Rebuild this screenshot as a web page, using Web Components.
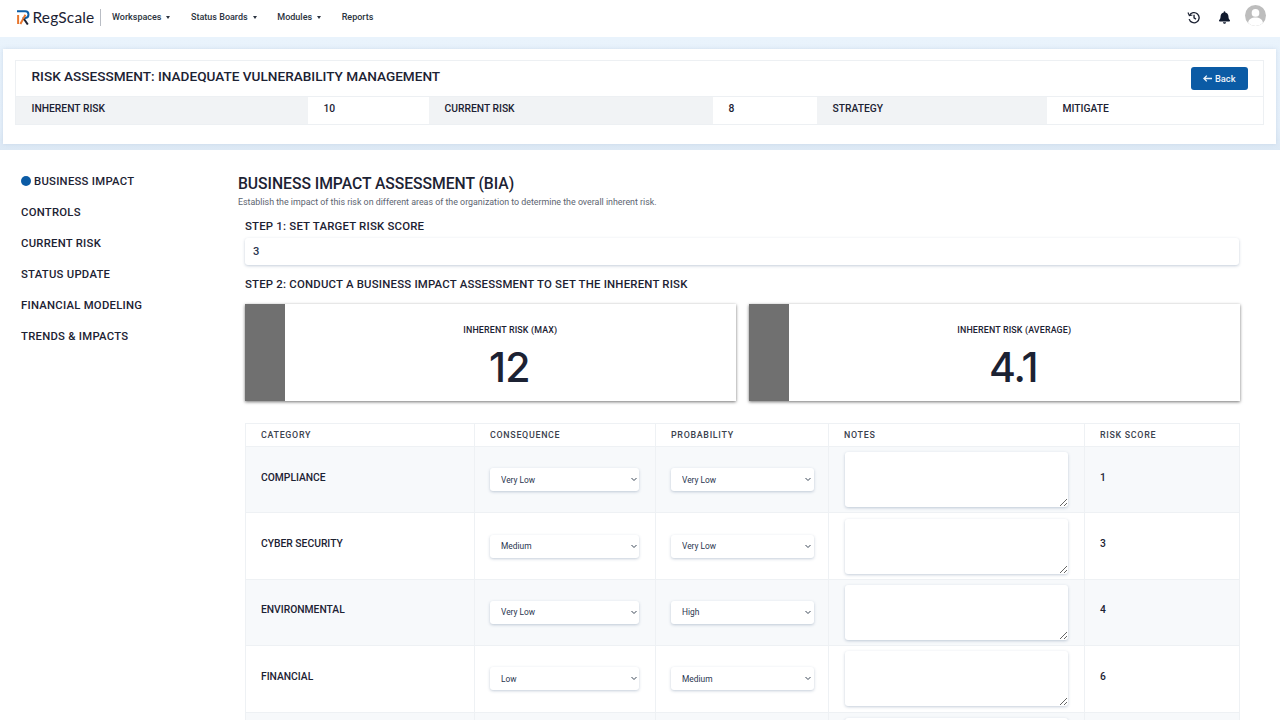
<!DOCTYPE html>
<html lang="en"><head><meta charset="utf-8"><title>Risk Assessment</title>
<style>
html,body{margin:0;height:720px;overflow:hidden;background:#fff;font-family:Roboto,"Liberation Sans",sans-serif;color:#1c2233}
app-page{display:block}
</style></head>
<body>
<template id="nav-t"><style>
:host{display:flex;align-items:center;height:37px;background:#fff;padding:0 14px 3px 17px;box-sizing:border-box;font:500 9px Roboto,sans-serif;color:#2b3340}
.logo{display:flex;align-items:center;gap:2.500px;height:17px;width:84px;box-sizing:border-box;border-right:1px solid #b9bdc4;margin-right:11px;flex:none}
.logo span{font:400 15.500px Lato,sans-serif;color:#1c2233;letter-spacing:.15px}
.item{display:flex;align-items:center;gap:5px;margin-right:20.600px}
.caret{width:0;height:0;border:2.600px solid transparent;border-top:3px solid #2b3340;border-bottom:0}
.sp{flex:1}.ic{display:flex}
.av{width:21px;height:21px;border-radius:50%;background:#bdbdbd;overflow:hidden;margin:-4px 0 0 14px}
</style>
<div class="logo"><svg width="13" height="15" viewBox="0 0 13 15"><path d="M1.100 14V5" stroke="#e8762d" stroke-width="2" fill="none"/><path d="M0 1.300H8.300C12.400 1.300 12.600 7.400 8.400 8H5.600" stroke="#0d5ea6" stroke-width="2" fill="none"/><path d="M3.400 14L8.400 4.800" stroke="#e8762d" stroke-width="2" fill="none"/><path d="M7 9L10.800 14.500" stroke="#1c2233" stroke-width="2" fill="none"/></svg><span>RegScale</span></div>
<div class="item">Workspaces <i class="caret"></i></div>
<div class="item">Status Boards <i class="caret"></i></div>
<div class="item">Modules <i class="caret"></i></div>
<div class="item">Reports</div>
<div class="sp"></div>
<div class="ic" style="margin-right:1px"><svg width="13" height="13" viewBox="0 0 24 24" fill="none" stroke="#1c2233" stroke-width="2.500"><path d="M4.600 8.200A9.400 9.400 0 1 1 4 15"/><path d="M1.800 2.800L4.400 8.600 10 7.400" stroke-width="2.200"/><path d="M13 7v5.600l3.600 2.400"/></svg></div>
<div class="ic" style="margin-left:18px;margin-right:1px"><svg width="11" height="13" viewBox="0 0 448 512" fill="#111a2e"><path d="M224 512c35 0 64-29 64-64H160c0 35 29 64 64 64zm215-150c-19-21-55-52-55-154 0-78-54-140-128-155V32a32 32 0 1 0-64 0v21C118 68 64 130 64 208c0 102-36 133-55 154-6 6-9 14-9 22 0 16 13 32 32 32h384c19 0 32-16 32-32 0-8-3-16-9-22z"/></svg></div>
<div class="av"><svg width="21" height="21" viewBox="0 0 24 24" fill="#fff"><circle cx="12" cy="9" r="4.400"/><path d="M3.500 21c0-4.400 4-6.600 8.500-6.600s8.500 2.200 8.500 6.600v3h-17z"/></svg></div>
</template>

<template id="hdr-t"><style>
:host{display:block;height:113px;background:linear-gradient(#e9f3fc,#e6f0fa 80%,#dde9f5);padding:12px 4px 6px 3px;box-sizing:border-box}
.card{background:#fff;height:95px;padding:11px 12px 0;box-sizing:border-box;box-shadow:0 0 4px rgba(120,150,190,.25)}
.box{border:1px solid #edf0f3;height:65px;box-sizing:border-box;display:flex;flex-direction:column}
.top{height:35px;display:flex;align-items:center;justify-content:space-between;padding:0 15px 0 15.500px;box-sizing:border-box}
h1{font:500 13.600px Roboto,sans-serif;margin:0;color:#1c2233;position:relative;top:-2.500px}
button{width:57px;height:23px;background:#0b5ba5;color:#eef4fa;border:0;border-radius:3px;font:500 9.300px Roboto,sans-serif;padding:0;display:flex;align-items:center;justify-content:center;gap:2.500px}
.row{flex:1;display:grid;grid-template-columns:292px 121px 284px 104px 230px 1fr;border-top:1px solid #edf0f3}
</style><div class="card"><div class="box">
<div class="top"><h1><slot name="title"></slot></h1><button><svg width="9" height="7" viewBox="0 0 9 7" fill="none" stroke="#eef4fa" stroke-width="1.300"><path d="M9 3.500H1M3.800.6L.9 3.500l2.900 2.900"/></svg>Back</button></div>
<div class="row"><slot></slot></div>
</div></div></template>

<template id="cell-t"><style>
:host{display:flex;align-items:center;padding:0 0 4px 15.500px;font:500 10.300px Roboto,sans-serif;color:#1c2233}
:host([g]){background:#f1f3f5}
</style><slot></slot></template>

<template id="side-t"><style>
:host{display:block;width:238px;padding:16px 0 0 21px;box-sizing:border-box;flex:none}
</style><slot></slot></template>

<template id="sitem-t"><style>
:host{display:flex;align-items:center;height:31px;font:500 11.300px Roboto,sans-serif;letter-spacing:.26px;color:#1c2233}
i{display:none;width:10px;height:10px;border-radius:50%;background:#0b5ba5;margin:-1px 3px 0 0}
:host([active]) i{display:block}
</style><i></i><slot></slot></template>

<template id="main-t"><style>
:host{display:block;flex:1;padding:24px 40px 0 0;min-width:0}
h2{font:500 15.700px Roboto,sans-serif;letter-spacing:-.03px;margin:0;line-height:20px;color:#1c2233}
p{font:400 8.850px Roboto,sans-serif;margin:2px 0 0;line-height:12px;color:#5c6470}
.in{padding-left:7px;padding-right:1px}
h3{font:500 11.400px Roboto,sans-serif;letter-spacing:.2px;margin:0;line-height:14px;color:#1c2233}
.input{margin-top:5px;height:27px;border-radius:3px;background:#fff;box-shadow:0 1px 3px rgba(60,90,130,.3);display:flex;align-items:center;padding-left:8px;font:500 11.200px Roboto,sans-serif;color:#2a3650}
.cards{display:grid;grid-template-columns:491px 491px;gap:13px;margin:13px 0 22px -0.500px}
</style>
<h2>BUSINESS IMPACT ASSESSMENT (BIA)</h2>
<p>Establish the impact of this risk on different areas of the organization to determine the overall inherent risk.</p>
<div class="in" style="margin-top:11px">
<h3>STEP 1: SET TARGET RISK SCORE</h3>
<div class="input">3</div>
<h3 style="margin-top:12px">STEP 2: CONDUCT A BUSINESS IMPACT ASSESSMENT TO SET THE INHERENT RISK</h3>
<div class="cards"><slot name="cards"></slot></div>
<slot></slot>
</div></template>

<template id="stat-t"><style>
:host{display:flex;height:97px;background:#fff;box-shadow:0 1px 3px rgba(0,0,0,.55)}
.bar{width:40.500px;background:#707070}
.b{flex:1;display:flex;flex-direction:column;align-items:center}
.l{font:500 8.900px Roboto,sans-serif;margin-top:21px;line-height:11px;color:#1c2233;letter-spacing:.15px}
.v{font:500 41px Inter,"Open Sans",sans-serif;line-height:40px;margin-top:11px;color:#1c2233;letter-spacing:-1px;padding-right:2px}
</style><div class="bar"></div><div class="b"><div class="l"><slot name="label"></slot></div><div class="v"><slot></slot></div></div></template>

<template id="table-t"><style>
:host{display:block;border:1px solid #eef1f4;border-bottom:0;box-sizing:border-box;width:995px}
.head{display:grid;grid-template-columns:229px 181px 173px 256px 1fr;height:22px;font:500 8.900px Roboto,sans-serif;letter-spacing:.7px;color:#3b424e}
.head div{display:flex;align-items:center;padding-left:15px;border-right:1px solid #eef1f4}
.head div:last-child{border:0}
</style><div class="head"><div>CATEGORY</div><div>CONSEQUENCE</div><div>PROBABILITY</div><div>NOTES</div><div>RISK SCORE</div></div><slot></slot></template>

<template id="row-t"><style>
:host{display:grid;grid-template-columns:229px 181px 173px 256px 1fr;height:66.400px;border-top:1px solid #eef1f4;box-sizing:border-box}
:host([shade]){background:#f7f9fb}
.c{display:flex;align-items:center;padding-left:15px;border-right:1px solid #eef1f4;font:500 10.300px Roboto,sans-serif;color:#1c2233;min-width:0}
.c:last-child{border:0}
.t{padding-bottom:5px}
.sel{position:relative;height:23px;border-radius:3px;background:#fff;box-shadow:0 1px 3px rgba(60,90,130,.3)}
select{appearance:none;-webkit-appearance:none;width:100%;height:100%;border:0;background:transparent;font:400 8.400px Roboto,sans-serif;color:#2a3650;padding:0 0 0 11px;margin:0;display:block;outline:0}
.sel svg{position:absolute;right:2.500px;top:9px;pointer-events:none}
textarea{display:block;width:223px;height:55px;box-sizing:border-box;border:0;border-radius:3px;background:#fff;box-shadow:0 1px 3px rgba(60,90,130,.3);padding:0;margin:0;resize:vertical;outline:0}
</style>
<div class="c"><span class="t"><slot></slot></span></div>
<div class="c"><div class="sel" style="width:149px"><select id="a"></select><svg width="6" height="5" viewBox="0 0 6 5" fill="none" stroke="#3b4656" stroke-width="1"><path d="M.5 1L3 3.500 5.500 1"/></svg></div></div>
<div class="c"><div class="sel" style="width:142.500px"><select id="b"></select><svg width="6" height="5" viewBox="0 0 6 5" fill="none" stroke="#3b4656" stroke-width="1"><path d="M.5 1L3 3.500 5.500 1"/></svg></div></div>
<div class="c" style="padding-left:15.500px"><textarea></textarea></div>
<div class="c"><span class="t" id="s"></span></div>
</template>

<template id="page-t"><style>
:host{display:block}
.body{display:flex}
</style><app-nav></app-nav><slot name="hdr"></slot><div class="body"><slot></slot></div></template>

<app-page>
<risk-header slot="hdr">
<span slot="title">RISK ASSESSMENT: INADEQUATE VULNERABILITY MANAGEMENT</span>
<stat-cell g>INHERENT RISK</stat-cell><stat-cell>10</stat-cell>
<stat-cell g>CURRENT RISK</stat-cell><stat-cell>8</stat-cell>
<stat-cell g>STRATEGY</stat-cell><stat-cell>MITIGATE</stat-cell>
</risk-header>
<side-nav>
<side-item active>BUSINESS IMPACT</side-item>
<side-item>CONTROLS</side-item>
<side-item>CURRENT RISK</side-item>
<side-item>STATUS UPDATE</side-item>
<side-item>FINANCIAL MODELING</side-item>
<side-item>TRENDS &amp; IMPACTS</side-item>
</side-nav>
<bia-main>
<stat-card slot="cards"><span slot="label">INHERENT RISK (MAX)</span>12</stat-card>
<stat-card slot="cards"><span slot="label">INHERENT RISK (AVERAGE)</span>4.1</stat-card>
<risk-table>
<risk-row shade c="Very Low" p="Very Low" s="1">COMPLIANCE</risk-row>
<risk-row c="Medium" p="Very Low" s="3">CYBER SECURITY</risk-row>
<risk-row shade c="Very Low" p="High" s="4">ENVIRONMENTAL</risk-row>
<risk-row c="Low" p="Medium" s="6">FINANCIAL</risk-row>
<risk-row shade c="Very Low" p="Very Low" s=""></risk-row>
</risk-table>
</bia-main>
</app-page>
<script>
const LEVELS=['Very Low','Low','Medium','High','Very High'];
function def(name,tid,init){customElements.define(name,class extends HTMLElement{constructor(){super();this.attachShadow({mode:'open'}).appendChild(document.getElementById(tid).content.cloneNode(true));}connectedCallback(){if(init)init(this)}})}
def('app-page','page-t');def('app-nav','nav-t');def('risk-header','hdr-t');def('stat-cell','cell-t');
def('side-nav','side-t');def('side-item','sitem-t');def('bia-main','main-t');def('stat-card','stat-t');def('risk-table','table-t');
def('risk-row','row-t',el=>{const r=el.shadowRoot;
 [['a','c'],['b','p']].forEach(([id,at])=>{const s=r.getElementById(id);LEVELS.forEach(l=>{const o=document.createElement('option');o.textContent=l;if(l===el.getAttribute(at))o.selected=true;s.appendChild(o)})});
 r.getElementById('s').textContent=el.getAttribute('s');});
</script>
</body></html>
